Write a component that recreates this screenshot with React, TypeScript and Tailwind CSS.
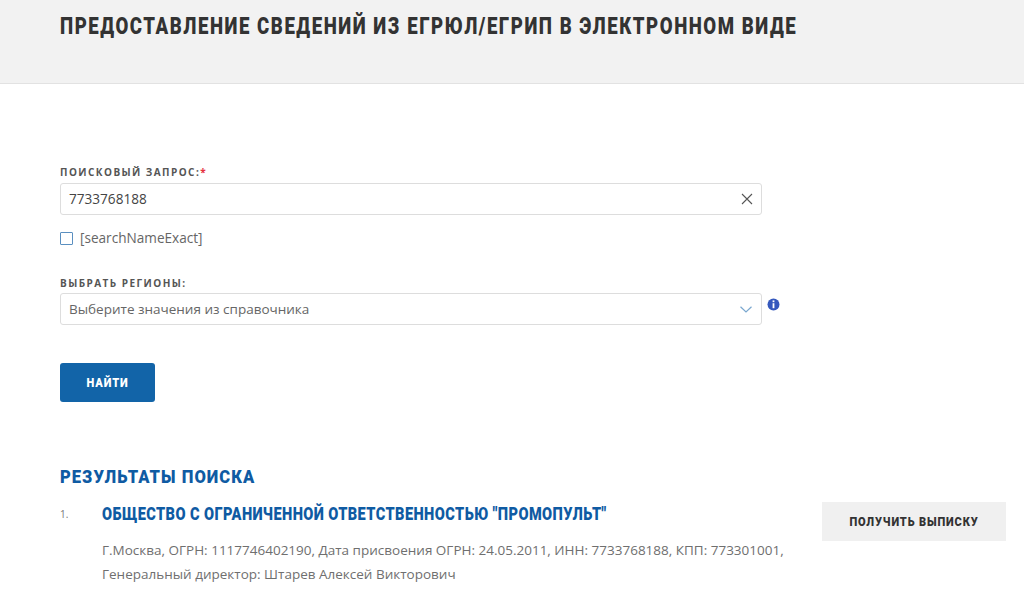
import React from "react";

const din = "font-['Roboto',sans-serif] font-black uppercase";

export default function App() {
  return (
    <div className="h-[606px] w-[1024px] overflow-hidden bg-white font-['Open_Sans',sans-serif] text-[13.6px] text-[#4a4a4a]">
      <header className="h-[84px] border-b border-[#e2e2e2] bg-[#f2f2f2] pl-[60px] pt-[12px]">
        <h1 className={`${din} w-max origin-left scale-x-[.775] whitespace-nowrap text-[24px] leading-[28px] tracking-[2px] text-[#333333]`}>
          Предоставление сведений из ЕГРЮЛ/ЕГРИП в электронном виде
        </h1>
      </header>

      <main className="pl-[60px] pt-[80px]">
        <label className="block text-[10px] font-bold uppercase leading-[16px] tracking-[1.45px] text-[#555555]">
          Поисковый запрос:<span className="text-[#e5323f]">*</span>
        </label>
        <div className="mt-[3px] flex h-[32px] w-[702px] items-center justify-between rounded-[3px] border border-[#dddddd] pl-[8px] pr-[7px]">
          <span className="text-[13.6px] text-[#444444]">7733768188</span>
          <svg width="14" height="14" viewBox="0 0 14 14" fill="none" stroke="#555555" strokeWidth="1.1">
            <path d="M2 2l10 10M12 2L2 12" />
          </svg>
        </div>

        <div className="mt-[14px] flex h-[18px] items-center">
          <span className="h-[13px] w-[13px] rounded-[1px] border border-[#5a8fc0]" />
          <span className="ml-[7px] text-[13.6px] text-[#666666]">[searchNameExact]</span>
        </div>

        <label className="mt-[28px] block text-[10px] font-bold uppercase leading-[16px] tracking-[1.45px] text-[#555555]">
          Выбрать регионы:
        </label>
        <div className="mt-[2px] flex items-start">
          <div className="flex h-[32px] w-[702px] items-center justify-between rounded-[3px] border border-[#dddddd] pl-[8px] pr-[9px]">
            <span className="text-[13.5px] text-[#666666]">Выберите значения из справочника</span>
            <svg width="12" height="7" viewBox="0 0 12 7" fill="none" stroke="#7aa7cf" strokeWidth="1.2">
              <path d="M0.5 0.8L6 6l5.5-5.2" />
            </svg>
          </div>
          <svg className="ml-[5px] mt-[5px]" width="13" height="13" viewBox="0 0 13 13">
            <circle cx="6.5" cy="6.5" r="6" fill="#3558bd" />
            <rect x="5.6" y="2.4" width="1.8" height="1.8" fill="#fff" />
            <rect x="5.6" y="5.2" width="1.8" height="5" fill="#fff" />
          </svg>
        </div>

        <button className="mt-[38px] block h-[39px] w-[95px] rounded-[3px] bg-[#1264a8] text-white">
          <span className={`${din} inline-block scale-x-[.82] text-[13.5px] tracking-[1px]`}>Найти</span>
        </button>

        <h2 className={`${din} mt-[62px] w-max origin-left scale-x-[.87] text-[19px] leading-[26px] tracking-[1.2px] text-[#0f5ba3]`}>
          Результаты поиска
        </h2>

        <div className="mt-[11px] flex items-start">
          <span className="mt-[5px] w-[42px] text-[10px] leading-[16px] text-[#777777]">1.</span>
          <div className="w-[700px]">
            <h3 className={`${din} w-max origin-left scale-x-[.81] whitespace-nowrap text-[18px] leading-[26px] tracking-[0.5px] text-[#0f5ba3]`}>
              Общество с ограниченной ответственностью "ПРОМОПУЛЬТ"
            </h3>
            <p className="mt-[11px] whitespace-nowrap text-[13.5px] leading-[24px] text-[#6f6f6f]">
              Г.Москва, ОГРН: 1117746402190, Дата присвоения ОГРН: 24.05.2011, ИНН: 7733768188, КПП: 773301001,
              <br />
              Генеральный директор: Штарев Алексей Викторович
            </p>
          </div>
          <button className="ml-[20px] mt-[1px] h-[39px] w-[184px] shrink-0 bg-[#f0f0f0] text-[#333333]">
            <span className={`${din} inline-block scale-x-[.85] whitespace-nowrap text-[13px] tracking-[1px]`}>Получить выписку</span>
          </button>
        </div>
      </main>
    </div>
  );
}
